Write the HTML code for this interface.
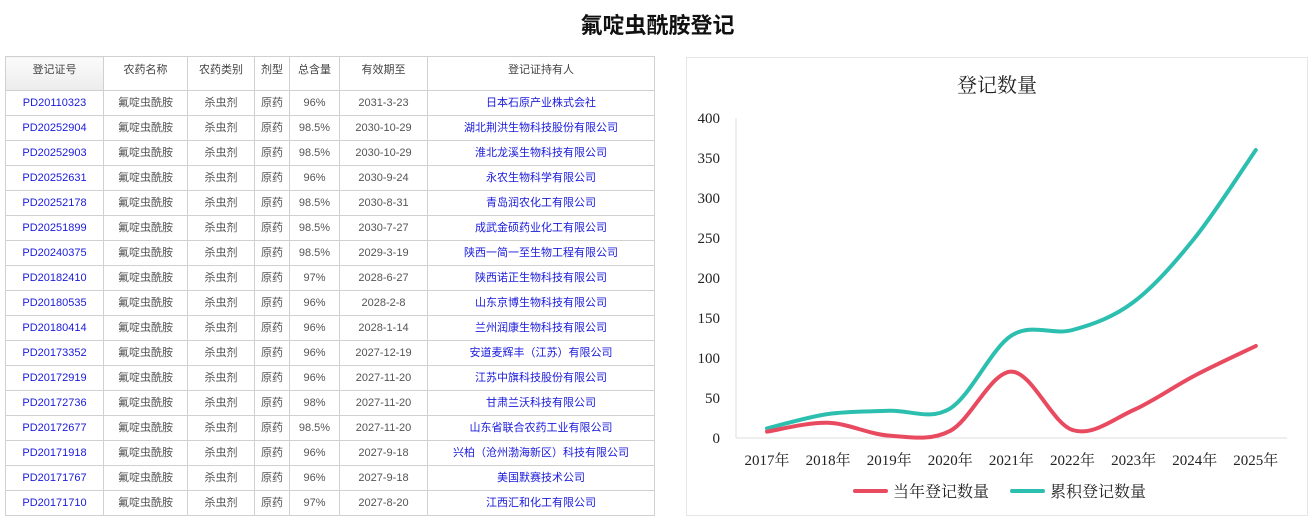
<!DOCTYPE html>
<html><head><meta charset="utf-8"><style>
body{margin:0;width:1315px;height:525px;background:#fff;font-family:"Liberation Sans","Noto Sans CJK SC",sans-serif;position:relative;overflow:hidden}
h1{position:absolute;left:0;width:1315px;top:8px;margin:0;text-align:center;font-size:22px;font-weight:bold;color:#111}
table{position:absolute;left:5px;top:56px;border-collapse:collapse;border:1px solid #ccc;font-size:11px;color:#555;table-layout:fixed;width:649px}
td,th{border:1px solid #d0d0d0;text-align:center;padding:0;white-space:nowrap;overflow:hidden}
td{height:24px;line-height:14px;padding:0;vertical-align:middle;box-sizing:content-box}
th{height:34px;line-height:14px;font-weight:normal;color:#444;vertical-align:top;padding-top:6px;box-sizing:border-box}
th.g{background:linear-gradient(#fbfbfb,#ececec)}
td a{color:#1a1adb;text-decoration:none}
.chart{position:absolute;left:686px;top:57px;width:620px;height:457px;border:1px solid #e6e6e6}
</style></head><body>
<h1>氟啶虫酰胺登记</h1>
<table>
<colgroup><col style="width:98px"><col style="width:84px"><col style="width:67px"><col style="width:35px"><col style="width:50px"><col style="width:88px"><col style="width:227px"></colgroup>
<tr><th class="g">登记证号</th><th>农药名称</th><th>农药类别</th><th>剂型</th><th>总含量</th><th>有效期至</th><th>登记证持有人</th></tr>
<tr><td><a>PD20110323</a></td><td>氟啶虫酰胺</td><td>杀虫剂</td><td>原药</td><td>96%</td><td>2031-3-23</td><td><a>日本石原产业株式会社</a></td></tr>
<tr><td><a>PD20252904</a></td><td>氟啶虫酰胺</td><td>杀虫剂</td><td>原药</td><td>98.5%</td><td>2030-10-29</td><td><a>湖北荆洪生物科技股份有限公司</a></td></tr>
<tr><td><a>PD20252903</a></td><td>氟啶虫酰胺</td><td>杀虫剂</td><td>原药</td><td>98.5%</td><td>2030-10-29</td><td><a>淮北龙溪生物科技有限公司</a></td></tr>
<tr><td><a>PD20252631</a></td><td>氟啶虫酰胺</td><td>杀虫剂</td><td>原药</td><td>96%</td><td>2030-9-24</td><td><a>永农生物科学有限公司</a></td></tr>
<tr><td><a>PD20252178</a></td><td>氟啶虫酰胺</td><td>杀虫剂</td><td>原药</td><td>98.5%</td><td>2030-8-31</td><td><a>青岛润农化工有限公司</a></td></tr>
<tr><td><a>PD20251899</a></td><td>氟啶虫酰胺</td><td>杀虫剂</td><td>原药</td><td>98.5%</td><td>2030-7-27</td><td><a>成武金硕药业化工有限公司</a></td></tr>
<tr><td><a>PD20240375</a></td><td>氟啶虫酰胺</td><td>杀虫剂</td><td>原药</td><td>98.5%</td><td>2029-3-19</td><td><a>陕西一简一至生物工程有限公司</a></td></tr>
<tr><td><a>PD20182410</a></td><td>氟啶虫酰胺</td><td>杀虫剂</td><td>原药</td><td>97%</td><td>2028-6-27</td><td><a>陕西诺正生物科技有限公司</a></td></tr>
<tr><td><a>PD20180535</a></td><td>氟啶虫酰胺</td><td>杀虫剂</td><td>原药</td><td>96%</td><td>2028-2-8</td><td><a>山东京博生物科技有限公司</a></td></tr>
<tr><td><a>PD20180414</a></td><td>氟啶虫酰胺</td><td>杀虫剂</td><td>原药</td><td>96%</td><td>2028-1-14</td><td><a>兰州润康生物科技有限公司</a></td></tr>
<tr><td><a>PD20173352</a></td><td>氟啶虫酰胺</td><td>杀虫剂</td><td>原药</td><td>96%</td><td>2027-12-19</td><td><a>安道麦辉丰（江苏）有限公司</a></td></tr>
<tr><td><a>PD20172919</a></td><td>氟啶虫酰胺</td><td>杀虫剂</td><td>原药</td><td>96%</td><td>2027-11-20</td><td><a>江苏中旗科技股份有限公司</a></td></tr>
<tr><td><a>PD20172736</a></td><td>氟啶虫酰胺</td><td>杀虫剂</td><td>原药</td><td>98%</td><td>2027-11-20</td><td><a>甘肃兰沃科技有限公司</a></td></tr>
<tr><td><a>PD20172677</a></td><td>氟啶虫酰胺</td><td>杀虫剂</td><td>原药</td><td>98.5%</td><td>2027-11-20</td><td><a>山东省联合农药工业有限公司</a></td></tr>
<tr><td><a>PD20171918</a></td><td>氟啶虫酰胺</td><td>杀虫剂</td><td>原药</td><td>96%</td><td>2027-9-18</td><td><a>兴柏（沧州渤海新区）科技有限公司</a></td></tr>
<tr><td><a>PD20171767</a></td><td>氟啶虫酰胺</td><td>杀虫剂</td><td>原药</td><td>96%</td><td>2027-9-18</td><td><a>美国默赛技术公司</a></td></tr>
<tr><td><a>PD20171710</a></td><td>氟啶虫酰胺</td><td>杀虫剂</td><td>原药</td><td>97%</td><td>2027-8-20</td><td><a>江西汇和化工有限公司</a></td></tr>
</table>
<div class="chart"></div>
<svg id="s" style="position:absolute;left:0;top:0" width="1315" height="525" font-family="Liberation Serif, Noto Serif CJK SC, serif">
<text x="997" y="92" font-size="20" text-anchor="middle" fill="#222">登记数量</text>
<line x1="736" y1="118" x2="736" y2="438" stroke="#ddd"/>
<line x1="736" y1="438" x2="1287" y2="438" stroke="#ddd"/>
<g font-size="15" text-anchor="end" fill="#222" id="yl"></g>
<g font-size="15" text-anchor="middle" fill="#222" id="xl"></g>
<path id="teal" fill="none" stroke="#2cbfb0" stroke-width="4" stroke-linecap="round"/>
<path id="red" fill="none" stroke="#e84a5f" stroke-width="4" stroke-linecap="round"/>
<line x1="855" y1="491" x2="886" y2="491" stroke="#e84a5f" stroke-width="4" stroke-linecap="round"/>
<text x="893" y="497" font-size="16" fill="#222">当年登记数量</text>
<line x1="1012" y1="491" x2="1043" y2="491" stroke="#2cbfb0" stroke-width="4" stroke-linecap="round"/>
<text x="1050" y="497" font-size="16" fill="#222">累积登记数量</text>
</svg>
<script>
var ns="http://www.w3.org/2000/svg";
var yl=document.getElementById('yl'),xl=document.getElementById('xl');
for(var v=0;v<=400;v+=50){var t=document.createElementNS(ns,'text');t.setAttribute('x',720);t.setAttribute('y',438-v*0.8+5);t.textContent=v;yl.appendChild(t);}
for(var i=0;i<9;i++){var t=document.createElementNS(ns,'text');t.setAttribute('x',767+61.1*i);t.setAttribute('y',465);t.textContent=(2017+i)+'年';xl.appendChild(t);}
function path(d){var p=d.map(function(v,i){return[767+61.1*i,438-v*0.8]});var s='M'+p[0][0]+','+p[0][1];
for(var i=0;i<p.length-1;i++){var a=p[i-1]||p[i],b=p[i],c=p[i+1],e=p[i+2]||c;
s+=' C'+(b[0]+(c[0]-a[0])/6)+','+(b[1]+(c[1]-a[1])/6)+' '+(c[0]-(e[0]-b[0])/6)+','+(c[1]-(e[1]-b[1])/6)+' '+c[0]+','+c[1];}return s;}
document.getElementById('teal').setAttribute('d',path([12,30,34,37,128,135,170,250,360]));
document.getElementById('red').setAttribute('d',path([8,19,3,9,83,10,35,78,115]));
</script>
</body></html>
